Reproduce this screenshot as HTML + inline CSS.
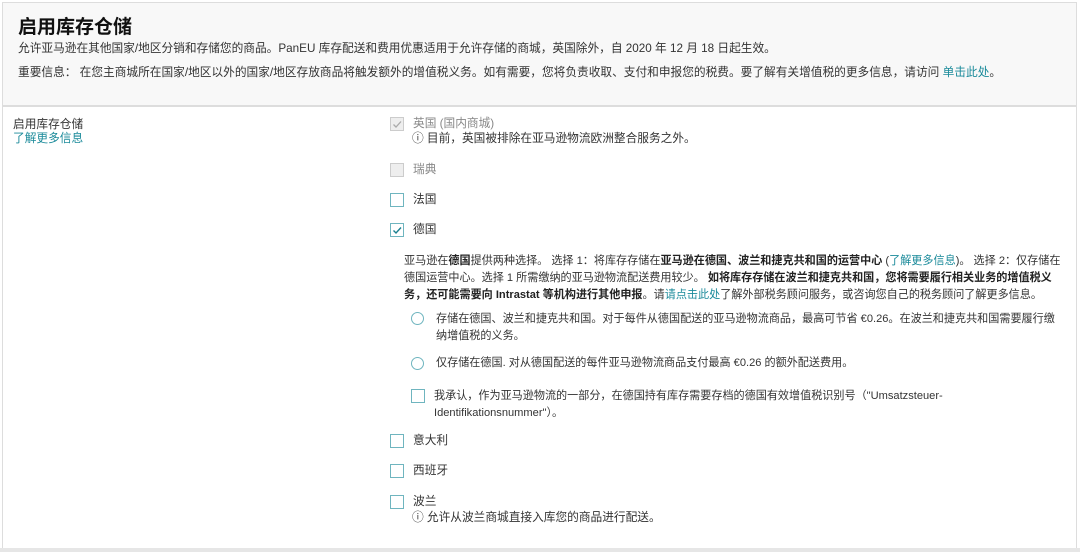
<!DOCTYPE html>
<html><head><meta charset="utf-8"><style>
*{margin:0;padding:0;box-sizing:border-box}
body{width:1080px;height:552px;background:#fff;font-family:"Liberation Sans","Noto Sans CJK SC",sans-serif;color:#333;font-size:11.7px;position:relative;overflow:hidden}
.frame{position:absolute;left:2px;top:2px;width:1075px;height:546px;border:1px solid #ddd;border-bottom:none}
.head{position:absolute;left:2px;top:2px;width:1075px;height:105px;background:#f8f8f8;border:1px solid #ddd;border-bottom:2px solid #ddd}
.bot{position:absolute;left:0;top:548px;width:1080px;height:4px;background:#e6e6e6}
.t{position:absolute;white-space:nowrap;line-height:14px}
a,.l{color:#1a8a9a}
.cb{position:absolute;width:14px;height:14px;border:1px solid #6fb5bf;background:#fff}
.cb.d{border-color:#ccc;background:#eee}
.rd{position:absolute;width:13px;height:13px;border:1px solid #6fb5bf;border-radius:50%}
b{font-weight:bold;color:#222}
.s{font-size:11.1px}
</style></head><body>
<div class="frame"></div>
<div class="head"></div>
<div class="bot"></div>
<div class="t" style="left:18px;top:16px;font-size:19px;font-weight:bold;color:#111;line-height:24px">启用库存仓储</div>
<div class="t" style="left:18px;top:42px">允许亚马逊在其他国家/地区分销和存储您的商品。PanEU 库存配送和费用优惠适用于允许存储的商城，英国除外，自 2020 年 12 月 18 日起生效。</div>
<div class="t" style="left:18px;top:66px">重要信息： 在您主商城所在国家/地区以外的国家/地区存放商品将触发额外的增值税义务。如有需要，您将负责收取、支付和申报您的税费。要了解有关增值税的更多信息，请访问 <span class="l">单击此处</span>。</div>
<div class="t" style="left:13px;top:118px">启用库存仓储</div>
<div class="t l" style="left:13px;top:132px">了解更多信息</div>

<div class="cb d" style="left:390px;top:117px"><svg width="12" height="12" style="position:absolute;left:0;top:0"><path d="M2.5 6.5l2.5 2.5L10 3.5" stroke="#aaa" stroke-width="1.3" fill="none"/></svg></div>
<div class="t" style="left:413px;top:117px;color:#888">英国 (国内商城)</div>
<div class="t" style="left:412px;top:132px">ⓘ 目前，英国被排除在亚马逊物流欧洲整合服务之外。</div>

<div class="cb d" style="left:390px;top:163px"></div>
<div class="t" style="left:413px;top:163px;color:#888">瑞典</div>
<div class="cb" style="left:390px;top:193px"></div>
<div class="t" style="left:413px;top:193px">法国</div>
<div class="cb" style="left:390px;top:223px"><svg width="12" height="12" style="position:absolute;left:0;top:0"><path d="M2.5 6.5l2.5 2.5L10 3.5" stroke="#1a7f8f" stroke-width="1.4" fill="none"/></svg></div>
<div class="t" style="left:413px;top:223px">德国</div>

<div class="t s" style="left:404px;top:253px;line-height:17px;white-space:normal;width:658px">亚马逊在<b>德国</b>提供两种选择。 选择 1：将库存存储在<b>亚马逊在德国、波兰和捷克共和国的运营中心</b> (<span class="l">了解更多信息</span>)。 选择 2：仅存储在德国运营中心。选择 1 所需缴纳的亚马逊物流配送费用较少。 <b>如将库存存储在波兰和捷克共和国，您将需要履行相关业务的增值税义务，还可能需要向 Intrastat 等机构进行其他申报</b>。请<span class="l">请点击此处</span>了解外部税务顾问服务，或咨询您自己的税务顾问了解更多信息。</div>

<div class="rd" style="left:411px;top:312px"></div>
<div class="t s" style="left:436px;top:311px;line-height:17px;white-space:normal;width:625px">存储在德国、波兰和捷克共和国。对于每件从德国配送的亚马逊物流商品，最高可节省 €0.26。在波兰和捷克共和国需要履行缴纳增值税的义务。</div>
<div class="rd" style="left:411px;top:357px"></div>
<div class="t s" style="left:436px;top:356px">仅存储在德国. 对从德国配送的每件亚马逊物流商品支付最高 €0.26 的额外配送费用。</div>
<div class="cb" style="left:411px;top:389px"></div>
<div class="t s" style="left:434px;top:388px;line-height:17px;white-space:normal;width:530px">我承认，作为亚马逊物流的一部分，在德国持有库存需要存档的德国有效增值税识别号（"Umsatzsteuer-Identifikationsnummer"）。</div>

<div class="cb" style="left:390px;top:434px"></div>
<div class="t" style="left:413px;top:434px">意大利</div>
<div class="cb" style="left:390px;top:464px"></div>
<div class="t" style="left:413px;top:464px">西班牙</div>
<div class="cb" style="left:390px;top:495px"></div>
<div class="t" style="left:413px;top:495px">波兰</div>
<div class="t" style="left:412px;top:511px">ⓘ 允许从波兰商城直接入库您的商品进行配送。</div>
</body></html>
